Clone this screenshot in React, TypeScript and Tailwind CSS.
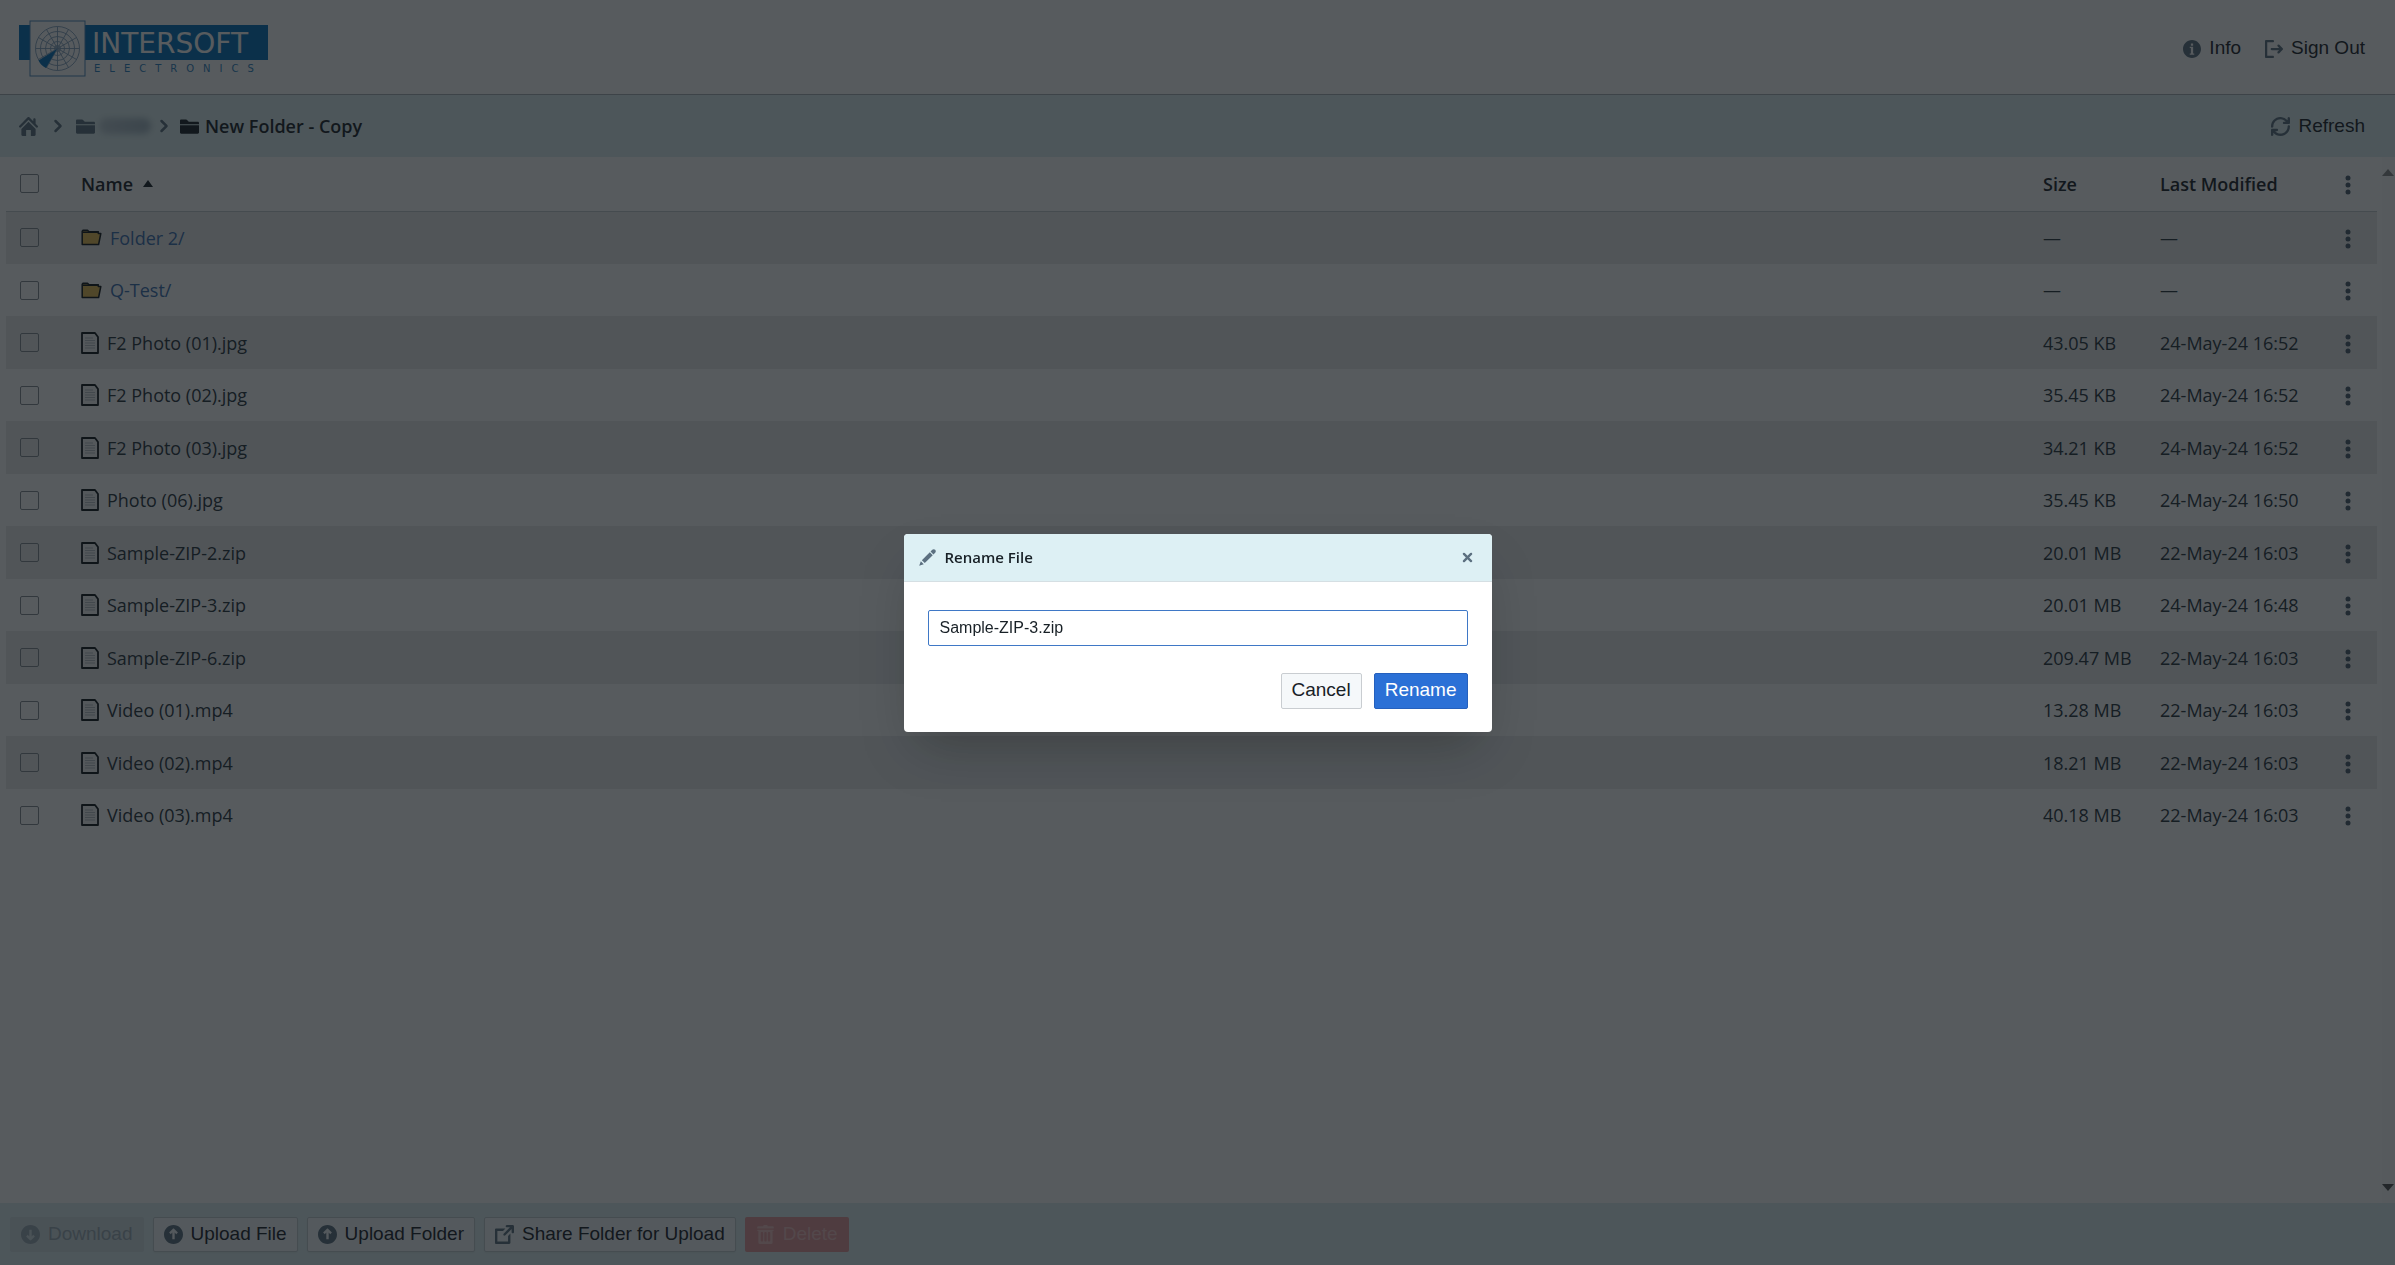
import React, { useState } from "react";

const icons = {
  info: "M8 0C3.58 0 0 3.58 0 8s3.58 8 8 8 8-3.58 8-8-3.58-8-8-8zM7 3h2v2H7V3zm3 10H6v-1h1V7H6V6h3v6h1v1z",
  logOut:
    "M7 14H2V2h5c.55 0 1-.45 1-1s-.45-1-1-1H1C.45 0 0 .45 0 1v14c0 .55.45 1 1 1h6c.55 0 1-.45 1-1s-.45-1-1-1zm8.71-6.71l-3-3a1.003 1.003 0 00-1.42 1.42L12.59 7H6c-.55 0-1 .45-1 1s.45 1 1 1h6.59L11.3 10.29c-.19.18-.3.43-.3.71a1.003 1.003 0 001.71.71l3-3c.18-.18.29-.43.29-.71 0-.28-.11-.53-.29-.71z",
  home: "M2 10v5c0 .55.45 1 1 1h3v-5h4v5h3c.55 0 1-.45 1-1v-5L8 4l-6 6zm13.71-2.71L14 5.59V2c0-.55-.45-1-1-1s-1 .45-1 1v1.59L8.71.29C8.53.11 8.28 0 8 0s-.53.11-.71.29l-7 7a1.003 1.003 0 001.42 1.42L8 2.41l6.29 6.29c.18.19.43.3.71.3a1.003 1.003 0 00.71-1.71z",
  folder:
    "M0 13c0 .55.45 1 1 1h14c.55 0 1-.45 1-1V7H0v6zm15-9H7.41L5.7 2.3A.965.965 0 005 2H1c-.55 0-1 .45-1 1v3h16V5c0-.55-.45-1-1-1z",
  chevron:
    "M10.71 7.29l-4-4a1.003 1.003 0 00-1.42 1.42L8.59 8 5.3 11.29c-.19.18-.3.43-.3.71a1.003 1.003 0 001.71.71l4-4c.18-.18.29-.43.29-.71 0-.28-.11-.53-.29-.71z",
  refresh:
    "M14.99 6.99c-.55 0-1 .45-1 1 0 3.31-2.69 6-6 6-1.77 0-3.36-.78-4.46-2h1.46c.55 0 1-.45 1-1s-.45-1-1-1h-4c-.55 0-1 .45-1 1v4c0 .55.45 1 1 1s1-.45 1-1v-1.74a7.95 7.95 0 006 2.74c4.42 0 8-3.58 8-8 0-.55-.45-1-1-1zm0-7c-.55 0-1 .45-1 1v1.74a7.95 7.95 0 00-6-2.74c-4.42 0-8 3.58-8 8 0 .55.45 1 1 1s1-.45 1-1c0-3.31 2.69-6 6-6 1.77 0 3.36.78 4.46 2h-1.46c-.55 0-1 .45-1 1s.45 1 1 1h4c.55 0 1-.45 1-1v-4c0-.55-.45-1-1-1z",
  share:
    "M10.99 13.99h-9v-9h4.76l2-2H.99c-.55 0-1 .45-1 1v11c0 .55.45 1 1 1h11c.55 0 1-.45 1-1V7.24l-2 2v4.75zm4-14h-5c-.55 0-1 .45-1 1s.45 1 1 1h2.59L7.29 7.28a1 1 0 00-.3.71 1.003 1.003 0 001.71.71l5.29-5.29V6c0 .55.45 1 1 1s1-.45 1-1V1c0-.56-.45-1.01-1-1.01z",
  trash:
    "M14.49 3.99h-13c-.28 0-.5.22-.5.5s.22.5.5.5h.5v10c0 .55.45 1 1 1h10c.55 0 1-.45 1-1v-10h.5c.28 0 .5-.22.5-.5s-.22-.5-.5-.5zm-8.5 9c0 .55-.45 1-1 1s-1-.45-1-1v-6c0-.55.45-1 1-1s1 .45 1 1v6zm3 0c0 .55-.45 1-1 1s-1-.45-1-1v-6c0-.55.45-1 1-1s1 .45 1 1v6zm3 0c0 .55-.45 1-1 1s-1-.45-1-1v-6c0-.55.45-1 1-1s1 .45 1 1v6zm2-12h-4c0-.55-.45-1-1-1h-2c-.55 0-1 .45-1 1h-4c-.55 0-1 .45-1 1v1h14v-1c0-.55-.45-1-1-1z",
  edit: "M3.25 10.26l2.47 2.47 6.69-6.69-2.46-2.48-6.7 6.7zM.99 14.99l3.86-1.39-2.46-2.44-1.4 3.83zm12.25-14c-.48 0-.92.2-1.24.51l-1.44 1.44 2.47 2.47 1.44-1.44c.32-.32.51-.75.51-1.24.01-.95-.77-1.74-1.74-1.74z",
  cross:
    "M9.41 8l2.29-2.29c.19-.18.3-.43.3-.71a1.003 1.003 0 00-1.71-.71L8 6.59l-2.29-2.3a1.003 1.003 0 00-1.42 1.42L6.59 8 4.3 10.29c-.19.18-.3.43-.3.71a1.003 1.003 0 001.71.71L8 9.41l2.29 2.29c.18.19.43.3.71.3a1.003 1.003 0 00.71-1.71L9.41 8z",
  up: "M8 0C3.58 0 0 3.58 0 8s3.58 8 8 8 8-3.58 8-8-3.58-8-8-8zM7 12V6.41L5.71 7.7 4.3 6.3l3-3c.4-.4 1-.4 1.4 0l3 3-1.41 1.4L9 6.41V12z",
  down: "M8 0C3.58 0 0 3.58 0 8s3.58 8 8 8 8-3.58 8-8-3.58-8-8-8zM7 4v5.59L5.71 8.3 4.3 9.7l3 3c.4.4 1 .4 1.4 0l3-3-1.41-1.4L9 9.59V4z",
};

type IconProps = { name: keyof typeof icons; className?: string };

const Icon = ({ name, className = "size-[19px]" }: IconProps) => (
  <svg
    viewBox="0 0 16 16"
    fill="currentColor"
    fillRule="evenodd"
    className={className}
    aria-hidden="true"
  >
    <path d={icons[name]} />
  </svg>
);

const FolderIcon = () => (
  <svg viewBox="0 0 21 17" className="h-[17px] w-[21px]" aria-hidden="true">
    <path
      d="M1.2 15.5V2.2L2 1.2h4.5L8 2.8h9.3v1.7h2.5L17.6 15.5z"
      fill="#e8bd50"
      stroke="#10161a"
      strokeWidth="1.5"
      strokeLinejoin="round"
    />
    <path d="M1.5 3.2h16" stroke="#10161a" strokeWidth="1.6" />
  </svg>
);

const FileIcon = () => (
  <svg viewBox="0 0 18 22" className="h-[22px] w-[18px]" aria-hidden="true">
    <path
      d="M1 1h13l3 4v16H1z"
      fill="#f4f5f6"
      stroke="#10161a"
      strokeWidth="1.8"
      strokeLinejoin="round"
    />
    <path
      d="M4 6h8M4 8.5h10M4 11h10M4 13.5h10M4 16h10"
      stroke="#a9b2b9"
      strokeWidth="0.8"
    />
  </svg>
);

const MoreButton = ({ label }: { label: string }) => (
  <button aria-label={label} className="block px-[5px] pt-[6px] pb-1 text-[#4b5c6b]">
    <svg viewBox="0 0 6 20" fill="currentColor" className="h-5 w-[6px]">
      <circle cx="3" cy="3" r="2.5" />
      <circle cx="3" cy="10" r="2.5" />
      <circle cx="3" cy="17" r="2.5" />
    </svg>
  </button>
);

const Checkbox = ({ label }: { label: string }) => (
  <input
    type="checkbox"
    aria-label={label}
    className="block size-[19px] appearance-none rounded-xs border border-[#838b92] bg-transparent"
  />
);

const Logo = () => (
  <a href="#home" aria-label="Intersoft Electronics">
    <svg viewBox="0 0 250 58" className="h-[58px] w-[250px]">
      <rect x="0" y="5" width="249" height="35" fill="#0071bc" />
      <rect x="11" y="1" width="55" height="55" fill="#fff" stroke="#4a86bd" />
      <g fill="none" stroke="#7f9dbb" strokeWidth="0.9">
        <circle cx="38.500" cy="28.500" r="22" />
        <circle cx="38.500" cy="28.500" r="17" />
        <circle cx="38.500" cy="28.500" r="12" />
        <circle cx="38.500" cy="28.500" r="7" />
        <circle cx="38.500" cy="28.500" r="3" />
        <path d="M16.500 28.500h44M38.500 6.500v44M27.500 9.450l22 38.100M49.500 9.450l-22 38.100M19.450 17.500l38.100 22M57.550 17.500l-38.100 22" />
      </g>
      <path d="M38 29L19.500 40.500q2 4.500 7.500 7.500z" fill="#0071bc" />
      <text
        x="73"
        y="33"
        fill="#fff"
        className="font-['DejaVu_Sans'] text-[28px]"
      >
        INTERSOFT
      </text>
      <text
        x="75"
        y="52"
        fill="#2d7fc0"
        className="font-['DejaVu_Sans'] text-[10px] tracking-[9px]"
      >
        ELECTRONICS
      </text>
    </svg>
  </a>
);

const files = [
  { name: "Folder 2/", size: "—", modified: "—", folder: true },
  { name: "Q-Test/", size: "—", modified: "—", folder: true },
  { name: "F2 Photo (01).jpg", size: "43.05 KB", modified: "24-May-24 16:52" },
  { name: "F2 Photo (02).jpg", size: "35.45 KB", modified: "24-May-24 16:52" },
  { name: "F2 Photo (03).jpg", size: "34.21 KB", modified: "24-May-24 16:52" },
  { name: "Photo (06).jpg", size: "35.45 KB", modified: "24-May-24 16:50" },
  { name: "Sample-ZIP-2.zip", size: "20.01 MB", modified: "22-May-24 16:03" },
  { name: "Sample-ZIP-3.zip", size: "20.01 MB", modified: "24-May-24 16:48" },
  { name: "Sample-ZIP-6.zip", size: "209.47 MB", modified: "22-May-24 16:03" },
  { name: "Video (01).mp4", size: "13.28 MB", modified: "22-May-24 16:03" },
  { name: "Video (02).mp4", size: "18.21 MB", modified: "22-May-24 16:03" },
  { name: "Video (03).mp4", size: "40.18 MB", modified: "22-May-24 16:03" },
];

const Header = () => (
  <header className="flex h-[95px] shrink-0 items-center justify-between border-b border-[#a9b0b5] pt-[3px] pr-[30px] pl-[19px] font-['Liberation_Sans',sans-serif] text-[19px]">
    <Logo />
    <div className="flex items-center gap-6">
      <button className="flex items-center gap-2">
        <Icon name="info" className="size-[18px] text-[#5c7080]" />
        Info
      </button>
      <button className="flex items-center gap-2">
        <Icon name="logOut" className="size-[18px] text-[#5c7080]" />
        Sign Out
      </button>
    </div>
  </header>
);

const Breadcrumbs = () => (
  <div className="flex h-[62px] shrink-0 items-center justify-between bg-[#deeff1] pr-[30px] pl-[19px]">
    <nav aria-label="Breadcrumb" className="flex items-center text-[#5c7080]">
      <a href="#home" aria-label="Home">
        <Icon name="home" />
      </a>
      <Icon name="chevron" className="mr-2 ml-[10px] size-5" />
      <a href="#parent" aria-label="Parent folder" className="flex items-center">
        <Icon name="folder" />
        <span className="ml-1 h-4 w-[52px] rounded-full bg-linear-to-r from-[#bccbd4] to-[#a3b6c2] blur-[3px]" />
      </a>
      <Icon name="chevron" className="mx-[3px] size-5" />
      <span className="ml-[3px] flex items-center gap-[6px] text-lg font-semibold text-[#182026]">
        <Icon name="folder" />
        New Folder - Copy
      </span>
    </nav>
    <button className="flex items-center gap-2 font-['Liberation_Sans',sans-serif] text-[19px]">
      <Icon name="refresh" className="size-[19px] text-[#5c7080]" />
      Refresh
    </button>
  </div>
);

const FileTable = () => (
  <table className="w-full table-fixed text-left text-lg">
    <thead>
      <tr className="h-[54px] border-b border-[#c4c9cd]">
        <th className="w-[75px] pl-[14px]">
          <Checkbox label="Select all" />
        </th>
        <th className="font-semibold" aria-sort="ascending">
          <button className="flex items-center gap-[10px]">
            Name
            <svg viewBox="0 0 10 7" className="h-[7px] w-[10px]">
              <path d="M5 0l5 7H0z" fill="#182026" />
            </svg>
          </button>
        </th>
        <th className="w-[117px] font-semibold">Size</th>
        <th className="w-[180px] font-semibold">Last Modified</th>
        <th className="w-[37px]">
          <MoreButton label="Column options" />
        </th>
      </tr>
    </thead>
    <tbody className="text-[#26323b]">
      {files.map((file) => (
        <tr
          key={file.name}
          className="odd:h-[53px] odd:bg-[#eaebec] even:h-[52px]"
        >
          <td className="pl-[14px]">
            <Checkbox label={`Select ${file.name}`} />
          </td>
          <td>
            {file.folder ? (
              <a
                href="#folder"
                className="flex items-center gap-2 text-[#3a6eb0]"
              >
                <FolderIcon />
                {file.name}
              </a>
            ) : (
              <span className="flex items-center gap-2">
                <FileIcon />
                {file.name}
              </span>
            )}
          </td>
          <td>{file.size}</td>
          <td>{file.modified}</td>
          <td>
            <MoreButton label={`Actions for ${file.name}`} />
          </td>
        </tr>
      ))}
    </tbody>
  </table>
);

const Scrollbar = () => (
  <div
    className="flex w-[13px] flex-col justify-between bg-[#fafafa] py-3"
    aria-hidden="true"
  >
    <svg viewBox="0 0 12 7" className="h-[7px] w-3">
      <path d="M6 0l6 7H0z" fill="#8b8b8b" />
    </svg>
    <svg viewBox="0 0 12 7" className="h-[7px] w-3">
      <path d="M0 0h12L6 7z" fill="#505050" />
    </svg>
  </div>
);

const toolButton =
  "flex h-[35px] items-center gap-2 rounded-xs border border-[#c3cbd1] bg-[#f5f8fa] px-[10px] shadow-xs";

const Toolbar = () => (
  <footer className="flex h-[62px] shrink-0 items-center gap-[9px] bg-[#deeff1] px-[10px] font-['Liberation_Sans',sans-serif] text-[19px]">
    <button
      disabled
      className="flex h-[35px] items-center gap-2 rounded-xs bg-[#d3e0e5] px-[11px] text-[#9caab5]"
    >
      <Icon name="down" />
      Download
    </button>
    <button className={toolButton}>
      <Icon name="up" className="size-[19px] text-[#5c7080]" />
      Upload File
    </button>
    <button className={toolButton}>
      <Icon name="up" className="size-[19px] text-[#5c7080]" />
      Upload Folder
    </button>
    <button className={toolButton}>
      <Icon name="share" className="size-[19px] text-[#5c7080]" />
      Share Folder for Upload
    </button>
    <button
      disabled
      className="flex h-[35px] items-center gap-2 rounded-xs bg-[#e39799] px-[11px] text-[#f0bfc0]"
    >
      <Icon name="trash" />
      Delete
    </button>
  </footer>
);

const RenameDialog = () => {
  const [name, setName] = useState("Sample-ZIP-3.zip");

  return (
    <div className="fixed inset-0 z-50 flex items-center justify-center bg-[#10161a]/70">
      <form
        role="dialog"
        aria-labelledby="rename-title"
        className="w-[588px] overflow-hidden rounded-sm bg-white shadow-2xl"
      >
        <div className="flex h-12 items-center border-b border-[#d5dfe3] bg-[#ddf0f4] pr-[15px] pl-[14px] text-[#5c7080]">
          <Icon name="edit" />
          <h2
            id="rename-title"
            className="ml-2 flex-1 text-[15px] font-semibold text-[#182026]"
          >
            Rename File
          </h2>
          <button type="button" aria-label="Close">
            <Icon name="cross" />
          </button>
        </div>
        <div className="px-6 pt-7 pb-[23px] font-['Liberation_Sans',sans-serif]">
          <input
            type="text"
            aria-label="File name"
            value={name}
            onChange={(e) => setName(e.target.value)}
            className="block h-9 w-full rounded-xs border border-[#3f78c6] px-[11px] text-base outline-none"
          />
          <div className="mt-[27px] flex justify-end gap-3 text-[19px]">
            <button
              type="button"
              className="h-9 rounded-xs border border-[#c9cdd1] bg-[#f5f8fa] px-[10px]"
            >
              Cancel
            </button>
            <button
              type="submit"
              className="h-9 rounded-xs border border-[#2560bd] bg-[#2b70d6] px-[10px] text-white"
            >
              Rename
            </button>
          </div>
        </div>
      </form>
    </div>
  );
};

const App = () => {
  return (
    <div className="flex h-screen flex-col bg-white font-['Open_Sans',sans-serif] text-[#182026]">
      <Header />
      <Breadcrumbs />
      <main className="flex min-h-0 flex-1 justify-between">
        <div className="min-w-0 flex-1 overflow-hidden pr-[5px] pl-[6px]">
          <FileTable />
        </div>
        <Scrollbar />
      </main>
      <Toolbar />
      <RenameDialog />
    </div>
  );
};

export default App;
